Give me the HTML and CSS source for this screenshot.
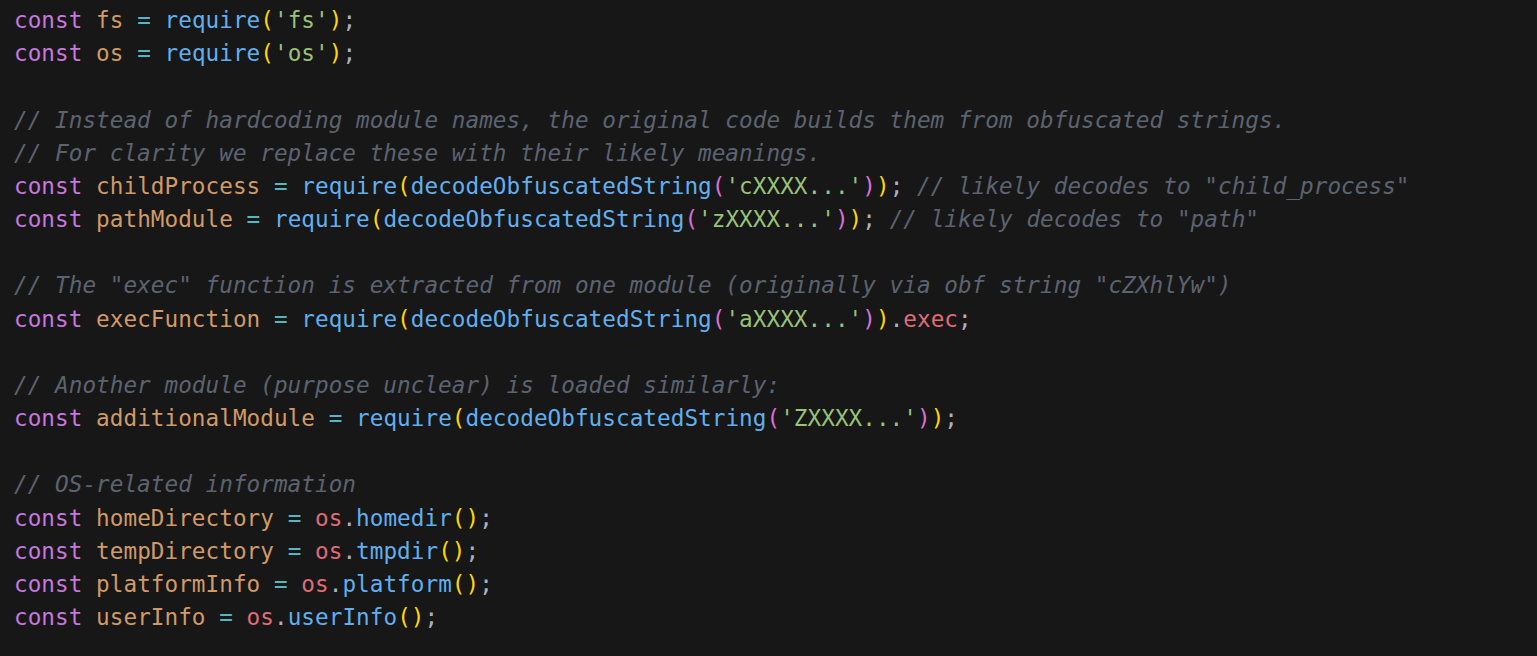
FILE: index.html
```html
<!DOCTYPE html>
<html>
<head>
<meta charset="utf-8">
<link rel="stylesheet" href="styles.css">
</head>
<body>
<pre class="code"><span class="k">const</span> <span class="v">fs</span> <span class="o">=</span> <span class="f">require</span><span class="b1">(</span><span class="s">'fs'</span><span class="b1">)</span><span class="p">;</span>
<span class="k">const</span> <span class="v">os</span> <span class="o">=</span> <span class="f">require</span><span class="b1">(</span><span class="s">'os'</span><span class="b1">)</span><span class="p">;</span>

<span class="c">// Instead of hardcoding module names, the original code builds them from obfuscated strings.</span>
<span class="c">// For clarity we replace these with their likely meanings.</span>
<span class="k">const</span> <span class="v">childProcess</span> <span class="o">=</span> <span class="f">require</span><span class="b1">(</span><span class="f">decodeObfuscatedString</span><span class="b2">(</span><span class="s">'cXXXX...'</span><span class="b2">)</span><span class="b1">)</span><span class="p">;</span> <span class="c">// likely decodes to "child_process"</span>
<span class="k">const</span> <span class="v">pathModule</span> <span class="o">=</span> <span class="f">require</span><span class="b1">(</span><span class="f">decodeObfuscatedString</span><span class="b2">(</span><span class="s">'zXXXX...'</span><span class="b2">)</span><span class="b1">)</span><span class="p">;</span> <span class="c">// likely decodes to "path"</span>

<span class="c">// The "exec" function is extracted from one module (originally via obf string "cZXhlYw")</span>
<span class="k">const</span> <span class="v">execFunction</span> <span class="o">=</span> <span class="f">require</span><span class="b1">(</span><span class="f">decodeObfuscatedString</span><span class="b2">(</span><span class="s">'aXXXX...'</span><span class="b2">)</span><span class="b1">)</span><span class="p">.</span><span class="r">exec</span><span class="p">;</span>

<span class="c">// Another module (purpose unclear) is loaded similarly:</span>
<span class="k">const</span> <span class="v">additionalModule</span> <span class="o">=</span> <span class="f">require</span><span class="b1">(</span><span class="f">decodeObfuscatedString</span><span class="b2">(</span><span class="s">'ZXXXX...'</span><span class="b2">)</span><span class="b1">)</span><span class="p">;</span>

<span class="c">// OS-related information</span>
<span class="k">const</span> <span class="v">homeDirectory</span> <span class="o">=</span> <span class="r">os</span><span class="p">.</span><span class="f">homedir</span><span class="b1">()</span><span class="p">;</span>
<span class="k">const</span> <span class="v">tempDirectory</span> <span class="o">=</span> <span class="r">os</span><span class="p">.</span><span class="f">tmpdir</span><span class="b1">()</span><span class="p">;</span>
<span class="k">const</span> <span class="v">platformInfo</span> <span class="o">=</span> <span class="r">os</span><span class="p">.</span><span class="f">platform</span><span class="b1">()</span><span class="p">;</span>
<span class="k">const</span> <span class="v">userInfo</span> <span class="o">=</span> <span class="r">os</span><span class="p">.</span><span class="f">userInfo</span><span class="b1">()</span><span class="p">;</span></pre>
</body>
</html>
```
FILE: styles.css
```css
html, body {
  margin: 0;
  padding: 0;
  background: #171717;
  height: 100%;
}
.code {
  margin: 0;
  padding: 4px 0 0 14px;
  font-family: "DejaVu Sans Mono", "Liberation Mono", monospace;
  font-size: 22.67px;
  line-height: 33.17px;
  letter-spacing: 0.04px;
  color: #abb2bf;
  white-space: pre;
}
.k { color: #c678dd; }
.v { color: #d19a66; }
.o { color: #56b6c2; }
.f { color: #61afef; }
.s { color: #98c379; }
.b1 { color: #ffd700; }
.b2 { color: #da70d6; }
.p { color: #abb2bf; }
.r { color: #e06c75; }
.c { color: #5c6370; font-style: italic; }
```
